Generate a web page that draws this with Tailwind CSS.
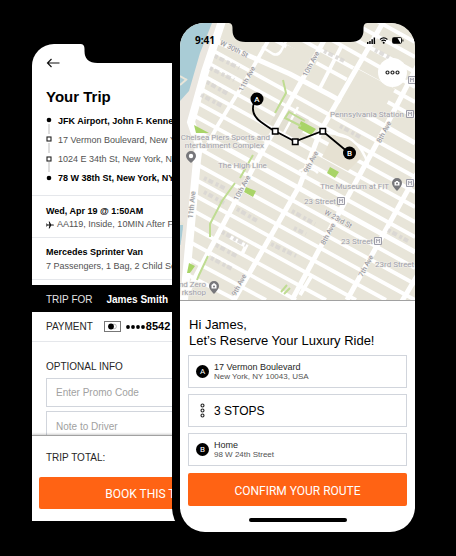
<!DOCTYPE html>
<html lang="en">
<head>
<meta charset="utf-8">
<meta name="viewport" content="width=device-width, initial-scale=1">
<title>Reserve Your Ride</title>
<script src="https://cdn.jsdelivr.net/npm/@tailwindcss/browser@4"></script>
</head>
<body class="bg-black font-['Liberation_Sans',Arial,sans-serif] text-black">
<main class="grid min-h-screen grid-cols-[32px_148px_1fr_41px] content-start pt-[23px] pb-6">

  <!-- Trip summary phone -->
  <section aria-label="Your trip" class="relative col-start-2 col-end-4 row-start-1 mt-[21px] mr-[148px] mb-[11px] flex min-w-0 flex-col overflow-hidden rounded-t-[22px] bg-white">
    <svg class="absolute top-0 left-1/2 -translate-x-1/2" width="139" height="19" viewBox="0 0 139 19" aria-hidden="true"><path d="M0 0Q4 0 4 5V7Q4 19 17 19H122Q135 19 135 7V5Q135 0 139 0Z"/></svg>
    <div class="px-3.5 pt-3.5">
      <button type="button" aria-label="Back" class="block">
        <svg width="14" height="10" viewBox="0 0 14 10" fill="none" stroke="#111" stroke-width="1.2"><path d="M13.500 5H1.500M5.500 1L1.500 5l4 4"/></svg>
      </button>
      <h1 class="mt-[19px] text-[15px] leading-5 font-bold">Your Trip</h1>
    </div>
    <div class="flex gap-1.5 border-b border-gray-200 px-3.5 pt-[5px] pb-[7px]">
      <svg class="mt-1 shrink-0" width="6" height="68" viewBox="0 0 6 68" aria-hidden="true">
        <path d="M3 8v10M3 27v10M3 46v10" stroke="#bbb"/>
        <circle cx="3" cy="4" r="2.300"/><circle cx="3" cy="62" r="2.300"/>
        <g fill="#fff" stroke="#222" stroke-width="1.100"><rect x="1" y="21" width="4" height="4"/><rect x="1" y="41" width="4" height="4"/></g>
      </svg>
      <ol class="text-[9px] leading-[19px] whitespace-nowrap text-neutral-600">
        <li class="font-bold text-black">JFK Airport, John F. Kennedy</li>
        <li>17 Vermon Boulevard, New York</li>
        <li>1024 E 34th St, New York, NY</li>
        <li class="font-bold text-black">78 W 38th St, New York, NY</li>
      </ol>
    </div>
    <div class="border-b border-gray-200 px-3.5 pt-[9px] pb-1.5 text-[9px] leading-[13px] whitespace-nowrap">
      <p class="font-bold">Wed, Apr 19 @ 1:50AM</p>
      <p class="flex items-center gap-[3px] text-neutral-600">
        <svg width="8" height="8" viewBox="0 0 8 8" aria-hidden="true" fill="#111"><path d="M8 4Q8 4.500 7 4.600H5.200L3.500 7.500H2.700L3.400 4.600H1.500L.8 5.500H.2L.5 4 .2 2.500H.8L1.500 3.400H3.400L2.700 .5H3.500L5.200 3.400H7Q8 3.500 8 4Z"/></svg>
        AA119, Inside, 10MIN After Flight
      </p>
    </div>
    <div class="border-b border-gray-200 px-3.5 pt-[7px] pb-1.5 text-[9px] leading-[14px] whitespace-nowrap">
      <p class="font-bold">Mercedes Sprinter Van</p>
      <p class="text-neutral-600">7 Passengers, 1 Bag, 2 Child Seats</p>
    </div>
    <div class="mt-[5px] flex h-[27px] shrink-0 items-center gap-3.5 bg-black px-3.5 pt-0.5 whitespace-nowrap text-white">
      <span class="text-[10px] text-neutral-200">TRIP FOR</span><span class="text-[10px] font-bold">James Smith</span>
    </div>
    <div class="flex h-[30px] shrink-0 items-center border-b border-gray-200 px-3.5 whitespace-nowrap">
      <span class="text-[10px] text-neutral-800">PAYMENT</span>
      <svg class="ml-[11px] shrink-0" width="17" height="11" viewBox="0 0 17 11" aria-hidden="true"><rect x=".5" y=".5" width="16" height="10" fill="#fff" stroke="#777"/><circle cx="10" cy="5.500" r="2.400" fill="#fff" stroke="#999" stroke-width=".7"/><circle cx="7" cy="5.500" r="2.900"/></svg>
      <svg class="ml-[5px] shrink-0" width="20" height="4" viewBox="0 0 20 4" role="img" aria-label="Card ending in"><circle cx="2" cy="2" r="1.900"/><circle cx="7" cy="2" r="1.900"/><circle cx="12" cy="2" r="1.900"/><circle cx="17" cy="2" r="1.900"/></svg>
      <span class="text-[11px] font-bold">8542</span>
    </div>
    <form class="min-h-0 flex-[1_1_0] overflow-hidden px-3.5 pt-[17px]">
      <p class="text-[10px] leading-4 text-neutral-800">OPTIONAL INFO</p>
      <input aria-label="Promo code" placeholder="Enter Promo Code" class="mt-[3px] block h-[29px] w-full border border-gray-300 px-[9px] text-[10px] placeholder:text-neutral-400">
      <input aria-label="Note to driver" placeholder="Note to Driver" class="mt-1 block h-[30px] w-full border border-gray-300 px-[9px] text-[10px] placeholder:text-neutral-400">
    </form>
    <footer class="relative shrink-0 border-t border-neutral-400 bg-white px-[7px] pt-3.5 pb-3 shadow-[0_-1px_2px_rgba(0,0,0,0.2)]">
      <p class="px-[7px] text-[10px] leading-4 text-neutral-800">TRIP TOTAL:</p>
      <button type="button" class="mt-[11px] block h-8 w-full rounded-xs bg-[#ff6314] pt-0.5 font-[Roboto,sans-serif] text-[12px] text-white">BOOK THIS TRIP</button>
    </footer>
  </section>

  <!-- Route phone -->
  <section aria-label="Reserve ride" class="relative z-10 col-start-3 row-start-1 flex flex-col rounded-[25px] bg-white shadow-[0_0_0_8px_#000]">
    <div class="relative overflow-hidden rounded-t-[24px] border-b border-neutral-400">
      <svg class="block h-[277px] w-full" viewBox="0 0 235 277" preserveAspectRatio="xMidYMid slice" role="img" aria-label="Route map of Manhattan">
        <rect width="235" height="277" fill="#e8e5d9"/>
        <path d="M0 0H36L27 16 17 48 9 75 0 80ZM0 202H3L2 222H0Z" fill="#a9ccd6"/>
        <path d="M0 78L9 68 20 30 32 0H42L24 55 12 100 18 125 14 190 2 277 0 277V225L4 200 0 198Z" fill="#eae6df"/>
        <path d="M0 53L7 57M0 62L7 56" stroke="#e8e5d9" stroke-width="2"/>
        <g stroke="#fff" stroke-width="3.800" fill="none">
          <path d="M139-34L235 19M139-19L235 34M152 4L235 49M120-1L235 64M84-4L235 79M60-2L235 94M30 26L235 139M26 39L235 154M22 52L235 169M19 65L235 184M16 79L235 199M13 92L235 214M18 125L235 245M18 142L235 261M16 157L235 277M14 172L206 277M12 187L176 277M10 203L146 277M8 218L116 277M6 234L86 277M4 250L56 277"/>
          <path d="M38 19L110 51 150 72 235 120M15 108L235 229" stroke-width="5"/>
          <path d="M88 18L67 55 38 102 24 128M162 22L140 65M50 214L66 223 62 231M120 272L132 252"/>
          <path d="M82 24L93 31Q98 33 101 28L111 9" stroke-width="2.500"/>
        </g>
        <g fill="#e8e5d9">
          <path d="M174 44L215 66 201 91 160 68Z"/>
          <path d="M163 74L188 88 180 103 155 89Z"/>
          <path d="M101 82L129 97 118 117 90 101Z" fill="#e2dfd2"/>
          <path d="M153 112L176 118 182 134 168 148 142 134Z" fill="#e6e1d2"/>
          <path d="M107 22L138 36 130 52 100 38Z"/>
        </g>
        <g stroke="#fff" fill="none">
          <path d="M42-2L25 49 11 99 19 122 17 137 4 277" stroke-width="8"/>
          <path d="M156-4L73 145 8 268M205-4L140 109 120 162 54 277M245 28L203 109 148 210 112 277M240 145L167 277M240 248L222 278" stroke-width="5"/>
          <path d="M140 111Q160 108 172 117T188 142M118 84L104 110M119 148Q130 142 138 150" stroke-width="2.500"/>
        </g>
        <g stroke="#d7d4d2" stroke-width="4" stroke-dasharray="3 2 5 3" fill="none">
          <path d="M35 33L59 45M30 45L54 57M27 59L48 71M21 72L44 84M144 28L164 38M24 155L46 166M24 169L44 180M57 186L79 199M42 209L66 222M36 222L58 234M31 235L54 247M91 221L116 233M112 188L135 201M114 205L126 211M160 103L180 114M195 27L210 35M208 207L228 218" opacity=".8"/>
        </g>
        <g fill="#a9d468">
          <path d="M14 102L29 110H16ZM121 98L136 106 131 112 118 105ZM66 164L76 168 73 174 64 169ZM150 144L159 149 155 155 147 150ZM9 240L15 243 10 250H7Z"/>
          <path d="M121 103L105 95 109 89 125 98M73 132L60 155M55 160L42 178 30 201V214M103 57L106 70 95 90M28 233L19 252 17 257M101 269L107 262M104 271L110 265" fill="none" stroke="#bfdc92" stroke-width="2"/>
        </g>
        <g font-family="Roboto, sans-serif" font-size="7" fill="#8c8c96" stroke="#f1efe9" stroke-width="1.200" paint-order="stroke" text-anchor="middle">
          <text transform="translate(53 28) rotate(27)">W 30th St</text>
          <text transform="translate(69 57) rotate(-62)">11th Ave</text>
          <text transform="translate(133 42) rotate(-62)">10th Ave</text>
          <text transform="translate(206 110) rotate(-62)">8th Ave</text>
          <text transform="translate(133 140) rotate(-62)">9th Ave</text>
          <text transform="translate(14 182) rotate(-84)">11th Ave</text>
          <text transform="translate(64 166) rotate(-62)">10th Ave</text>
          <text transform="translate(61 263) rotate(-62)">9th Ave</text>
          <text transform="translate(150 212) rotate(-62)">8th Ave</text>
          <text transform="translate(188 244) rotate(-62)">7th Ave</text>
          <text transform="translate(157 198) rotate(29)">W 23rd St</text>
        </g>
        <g font-family="Roboto, sans-serif" font-size="8" fill="#9f9fa9" stroke="#f1efe9" stroke-width="1.200" paint-order="stroke">
          <text x="90" y="117" text-anchor="end">Chelsea Piers Sports and</text>
          <text x="84" y="125" text-anchor="end">ntertainment Complex</text>
          <text x="38" y="145">The High Line</text>
          <text x="224" y="94" text-anchor="end">Pennsylvania Station</text>
          <text x="209" y="166" text-anchor="end">The Museum at FIT</text>
          <text x="156" y="181" text-anchor="end">23 Street</text>
          <text x="193" y="221" text-anchor="end">23 Street</text>
          <text x="195" y="244">23rd Street</text>
          <text x="26" y="264" text-anchor="end">nd Zero</text>
          <text x="26" y="272" text-anchor="end">rkshop</text>
        </g>
        <g fill="#f4f3f4" stroke="#9c9ca8">
          <path d="M226.500 87.500h7v7h-7zM157.500 174.500h7v7h-7zM194.500 214.500h7v7h-7zM226.500 156.500h7v7h-7zM228.500 53.500h7v7h-7z"/><path d="M228.500 93v-4l1.500 2 1.500-2v4M159.500 180v-4l1.500 2 1.500-2v4M196.500 220v-4l1.500 2 1.500-2v4M228.500 162v-4l1.500 2 1.500-2v4M230.500 59v-4l1.500 2 1.500-2v4" fill="none" stroke-width=".8"/>
        </g>
        <g fill="#77777b">
          <path d="M11 140Q6 136 6 133a5 5 0 0 1 10 0Q16 136 11 140ZM34 271Q29 266 29 263a5 5 0 0 1 10 0Q39 266 34 271ZM217 168Q212 163 212 160a5 5 0 0 1 10 0Q222 163 217 168Z"/>
          <g fill="#fff"><circle cx="11" cy="133" r="2.200"/><path d="M31.500 262L34 260l2.500 2v3.500h-5zM214.500 159h1l.5-1h2l.5 1h1v3.500h-5z"/></g>
          <circle cx="34" cy="263.500" r="1"/><circle cx="217" cy="160.500" r="1"/>
        </g>
        <path d="M74 80Q70 91 81 99T95 108L115 118.500 142.500 108 169 130" fill="none" stroke="#000" stroke-width="1.800"/>
        <g fill="#fff" stroke="#000" stroke-width="1.500"><rect x="92.500" y="105.500" width="5.500" height="5.500"/><rect x="112.500" y="116" width="5.500" height="5.500"/><rect x="140" y="105.500" width="5.500" height="5.500"/></g>
        <circle cx="77" cy="76" r="6.500"/><circle cx="169.500" cy="130" r="6.500"/>
        <g fill="#fff" font-family="Roboto, sans-serif" font-size="8" font-weight="500" text-anchor="middle"><text x="77" y="79">A</text><text x="169.500" y="133">B</text></g>
      </svg>
      <svg class="absolute top-0 left-1/2 -translate-x-1/2" width="139" height="19" viewBox="0 0 139 19" aria-hidden="true"><path d="M0 0Q4 0 4 5V7Q4 19 17 19H122Q135 19 135 7V5Q135 0 139 0Z"/></svg>
      <div class="absolute inset-x-0 top-3 flex items-center justify-between pr-[11px] pl-[15px]">
        <span class="font-['Open_Sans',sans-serif] text-[10px] leading-[11px] font-bold">9:41</span>
        <svg width="37" height="7" viewBox="0 0 37 7" aria-hidden="true">
          <path d="M0 5h1.500v2H0zM2.200 4h1.500v3H2.200zM4.400 2.300h1.500V7H4.400zM6.600.5h1.500V7H6.600z"/>
          <path d="M13 2.500Q16.700-.8 20.400 2.500M14.500 4Q16.700 2.200 18.900 4" fill="none" stroke="#000" stroke-width="1.100"/><circle cx="16.700" cy="5.800" r="1"/>
          <rect x="25.500" y=".6" width="9" height="5.800" rx="1" fill="#fff" stroke="#000" stroke-width=".9"/><path d="M26 1h4.500l3 5H26zM35.400 2.500h1v2h-1z"/>
        </svg>
      </div>
      <button type="button" aria-label="More options" class="absolute top-[35px] right-[8px] grid size-[29px] place-items-center rounded-full bg-white">
        <svg width="15" height="5" viewBox="0 0 15 5" fill="none" stroke="#222" stroke-width="1.200"><circle cx="2.500" cy="2.500" r="1.500"/><circle cx="7.500" cy="2.500" r="1.500"/><circle cx="12.500" cy="2.500" r="1.500"/></svg>
      </button>
    </div>
    <div class="px-2 pt-4">
      <h2 class="px-px text-[13px] leading-4">Hi James,<br>Let’s Reserve Your Luxury Ride!</h2>
      <div class="mt-1.5 flex flex-col gap-1.5">
        <button type="button" class="flex h-[33px] items-center gap-[5px] border border-gray-300 pl-[7px] text-left">
          <span class="grid size-[13px] place-items-center rounded-full bg-black font-[Roboto,sans-serif] text-[8px] leading-none text-white">A</span>
          <span class="text-[9px] leading-[10px] text-neutral-800">17 Vermon Boulevard<span class="block text-[8px] text-neutral-600">New York, NY 10043, USA</span></span>
        </button>
        <button type="button" class="flex h-[33px] items-center gap-[5px] border border-gray-300 pl-[7px] text-left">
          <svg width="13" height="15" viewBox="0 0 13 15" fill="none" stroke="#222" stroke-width="1.100" aria-hidden="true"><circle cx="6.500" cy="2.500" r="1.500"/><circle cx="6.500" cy="7.500" r="1.500"/><circle cx="6.500" cy="12.500" r="1.500"/></svg>
          <span class="text-[12px] leading-4">3 STOPS</span>
        </button>
        <button type="button" class="flex h-[33px] items-center gap-[5px] border border-gray-300 pl-[7px] text-left">
          <span class="grid size-[13px] place-items-center rounded-full bg-black font-[Roboto,sans-serif] text-[8px] leading-none text-white">B</span>
          <span class="text-[9px] leading-[10px] text-neutral-800">Home<span class="block text-[8px] text-neutral-600">98 W 24th Street</span></span>
        </button>
      </div>
      <button type="button" class="mt-[7px] block h-[33px] w-full rounded-xs bg-[#ff6314] pt-0.5 font-[Roboto,sans-serif] text-[12px] text-white">CONFIRM YOUR ROUTE</button>
    </div>
    <div class="mx-auto mt-3 mb-2.5 h-1 w-[98px] rounded-full bg-black"></div>
  </section>
</main>
</body>
</html>
